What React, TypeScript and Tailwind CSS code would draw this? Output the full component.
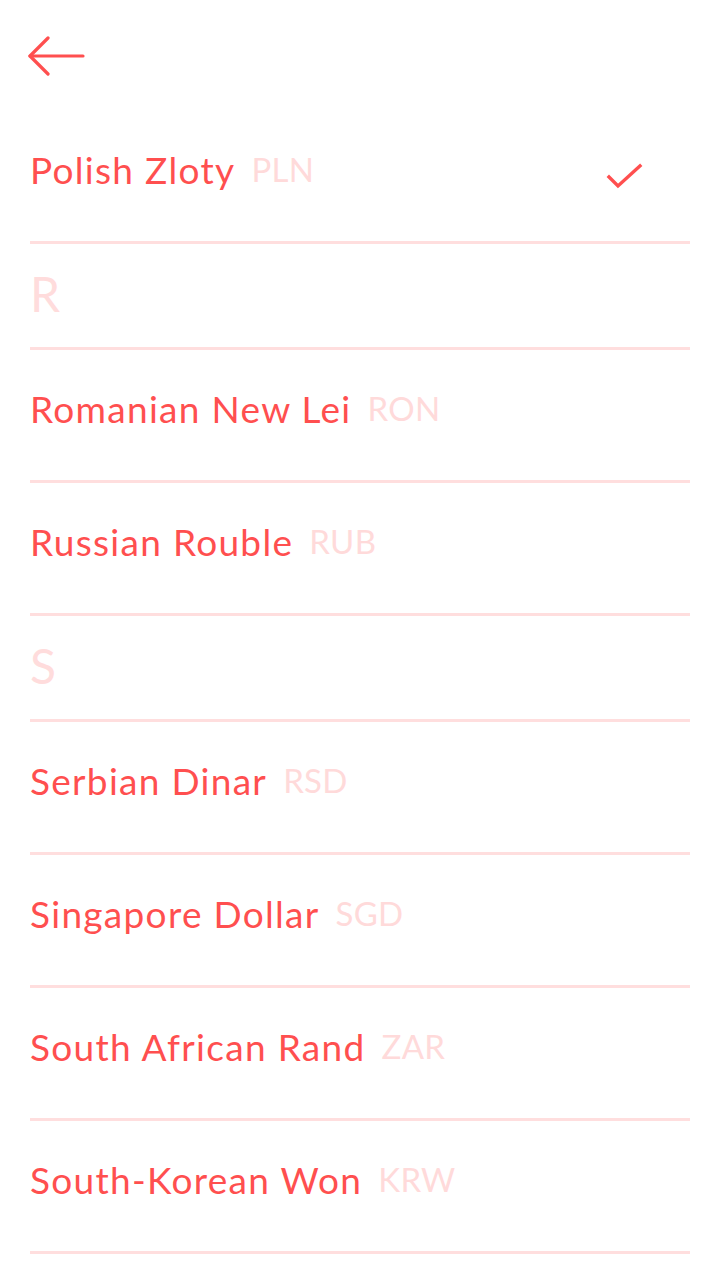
import React from "react";

type Item = { kind: "row"; name: string; code: string; checked?: boolean } | { kind: "header"; letter: string };

const items: Item[] = [
  { kind: "row", name: "Polish Zloty", code: "PLN", checked: true },
  { kind: "header", letter: "R" },
  { kind: "row", name: "Romanian New Lei", code: "RON" },
  { kind: "row", name: "Russian Rouble", code: "RUB" },
  { kind: "header", letter: "S" },
  { kind: "row", name: "Serbian Dinar", code: "RSD" },
  { kind: "row", name: "Singapore Dollar", code: "SGD" },
  { kind: "row", name: "South African Rand", code: "ZAR" },
  { kind: "row", name: "South-Korean Won", code: "KRW" },
];

export default function App() {
  return (
    <div className="w-[720px] h-[1280px] bg-white overflow-hidden" style={{ fontFamily: "Lato, 'Open Sans', sans-serif" }}>
      <div className="h-[111px] pl-[28px] pt-[36px]">
        <svg width="58" height="42" viewBox="0 0 58 42" fill="none" stroke="#FF4F4F" strokeWidth="3.2" strokeLinecap="round" strokeLinejoin="round">
          <path d="M2 20H55" />
          <path d="M20 2L2 20L20 38" />
        </svg>
      </div>
      <div className="px-[30px]">
        {items.map((it, i) =>
          it.kind === "header" ? (
            <div key={i} className="h-[106px] border-b-[3px] border-[#FFDEDE] flex items-center pb-[4px]">
              <span className="text-[48px] leading-none text-[#FFDCDC]">{it.letter}</span>
            </div>
          ) : (
            <div key={i} className="h-[133px] border-b-[3px] border-[#FFDEDE] flex items-center pb-[13px]">
              <span className="text-[37px] leading-none tracking-[1.3px] text-[#FF4F4F]">{it.name}</span>
              <span className="ml-[16px] text-[33px] leading-none tracking-[0.3px] text-[#FFDADA]">{it.code}</span>
              {it.checked && (
                <svg className="ml-auto mr-[46px] mt-[14px]" width="38" height="30" viewBox="0 0 38 30" fill="none" stroke="#FF4F4F" strokeWidth="3.4" strokeLinecap="square">
                  <path d="M3 15L12 24L34 4" />
                </svg>
              )}
            </div>
          )
        )}
      </div>
    </div>
  );
}
